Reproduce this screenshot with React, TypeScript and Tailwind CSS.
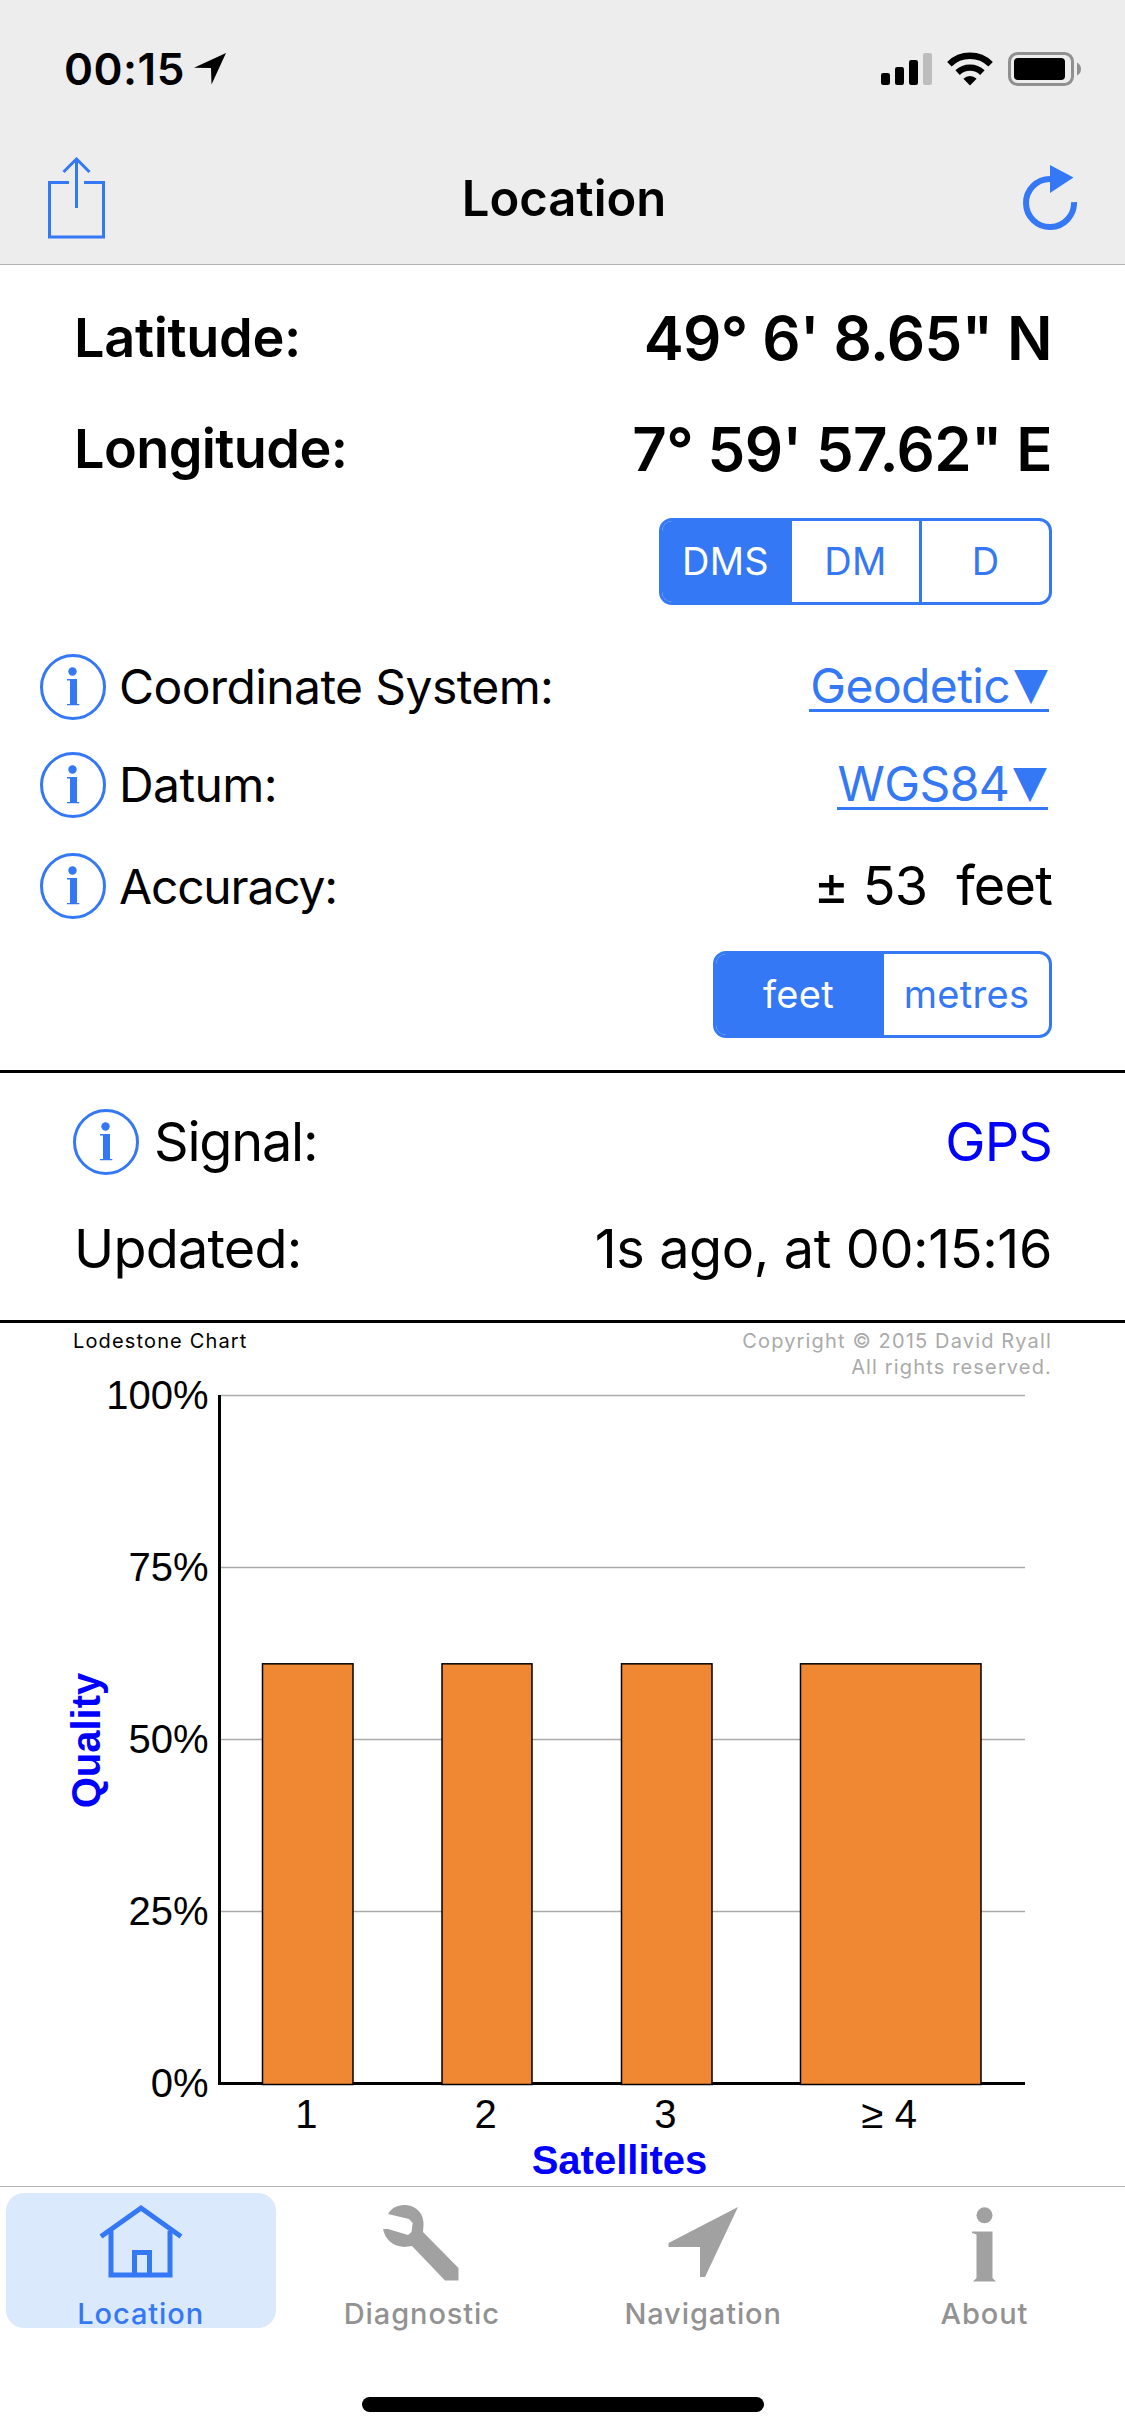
import { clsx } from "clsx"
import type { ReactNode } from "react"

const quality = [
  { label: "1", x: 262.5, width: 90.5, value: 61 },
  { label: "2", x: 442, width: 90, value: 61 },
  { label: "3", x: 621.5, width: 90.5, value: 61 },
  { label: "≥ 4", x: 800.5, width: 180.5, value: 61 },
]

const BASELINE = 703.5
const PX_PER_PERCENT = 6.88

function StatusBar() {
  return (
    <div className="flex h-[132px] items-center pt-[6px] pr-[44px] pl-[64px]">
      <span className="text-[44px] leading-none font-semibold tracking-[0.5px]">00:15</span>
      <svg className="ml-[9px] h-8 w-8" viewBox="0 0 32 32">
        <path d="M32 0 17.5 31.5 17 15 0 14.7Z" />
      </svg>
      <div className="ml-auto flex items-center">
        <svg className="h-8 w-[51px]" viewBox="0 0 51 32">
          <rect x="0" y="20" width="9" height="12" rx="2.2" />
          <rect x="14" y="14" width="9" height="18" rx="2.2" />
          <rect x="28" y="7" width="9" height="25" rx="2.2" />
          <rect x="42" y="0" width="9" height="32" rx="2.2" fill="#bdbdbd" />
        </svg>
        <svg className="ml-[15px] h-[34px] w-[46px]" viewBox="0 0 46 34">
          <g fill="none" stroke="#000" strokeWidth="6.4">
            <path d="M2.4 12.2A29.5 29.5 0 0 1 43.6 12.2" />
            <path d="M10.6 20.6A18 18 0 0 1 35.4 20.6" />
          </g>
          <path d="M23 33.5 16.4 26.7A9.5 9.5 0 0 1 29.6 26.7Z" />
        </svg>
        <svg className="ml-[15px] h-[34px] w-[73px]" viewBox="0 0 73 34">
          <rect x="1.5" y="1.5" width="63" height="31" rx="8" fill="none" stroke="#909090" strokeWidth="3" />
          <rect x="6" y="6" width="51" height="22" rx="4" />
          <path d="M69 10.5Q73 12.5 73 17T69 23.5Z" fill="#909090" />
        </svg>
      </div>
    </div>
  )
}

function NavBar() {
  return (
    <div className="flex h-[132px] items-center justify-between px-[48px]">
      <svg className="h-[82px] w-[57px] text-[#3478f6]" viewBox="0 0 57 82" fill="none" stroke="currentColor" strokeWidth="3">
        <path d="M21 25.5H1.5V80H55.5V25.5H36" />
        <path d="M28.5 51V2M15.5 15 28.5 2 41.5 15" />
      </svg>
      <h1 className="text-[49px] leading-none font-semibold">Location</h1>
      <svg className="h-[66px] w-[54px] text-[#3478f6]" viewBox="0 0 54 66">
        <path d="M27 14A24 24 0 1 0 51 37" fill="none" stroke="currentColor" strokeWidth="6" />
        <path d="M27 0 50.5 12.5 27 28Z" fill="currentColor" />
      </svg>
    </div>
  )
}

function InfoIcon() {
  return (
    <svg className="h-[66px] w-[66px] shrink-0 text-[#3478f6]" viewBox="0 0 66 66">
      <circle cx="33" cy="33" r="31.5" fill="none" stroke="currentColor" strokeWidth="3" />
      <circle cx="32.5" cy="17.5" r="4.2" fill="currentColor" />
      <path d="M27 25H37V50H39.3V51.2H27V50H30V26.5H27Z" fill="currentColor" />
    </svg>
  )
}

function Segmented({ options, selected }: { options: string[]; selected: string }) {
  return (
    <div className="flex h-[87px] overflow-hidden rounded-[13px] border-3 border-[#3478f6]">
      {options.map((option, i) => (
        <button
          key={option}
          className={clsx(
            "flex-1 pb-[2px] text-[38px] leading-none tracking-[0.3px]",
            option === selected ? "bg-[#3478f6] text-white" : "text-[#3478f6]",
            i > 0 && "border-l-3 border-[#3478f6]"
          )}
        >
          {option}
        </button>
      ))}
    </div>
  )
}

function DropdownLink({ children }: { children: ReactNode }) {
  return (
    <a className="mt-px flex items-baseline border-b-3 border-[#3478f6] pl-px text-[48px] leading-[46px] tracking-[-0.6px] text-[#3478f6]">
      {children}
      <span className="ml-[2px] origin-bottom scale-y-120 text-[37px] leading-none">▼</span>
    </a>
  )
}

function QualityChart() {
  return (
    <svg className="block h-[806px] w-[1125px] overflow-visible font-['Liberation_Sans',sans-serif]" viewBox="0 0 1125 806" fontSize="40">
      {[100, 75, 50, 25, 0].map((tick) => {
        const y = BASELINE - tick * PX_PER_PERCENT
        return (
          <g key={tick}>
            {tick > 0 && <line x1="221" x2="1025" y1={y} y2={y} stroke="#aaa" strokeWidth="1.5" />}
            <text x="208.5" y={y + 13.7} textAnchor="end">
              {tick}%
            </text>
          </g>
        )
      })}
      <path d="M219.5 15V703.5H1025" fill="none" stroke="#000" strokeWidth="3" />
      {quality.map((bar) => (
        <g key={bar.label}>
          <rect
            x={bar.x}
            y={BASELINE - bar.value * PX_PER_PERCENT}
            width={bar.width}
            height={bar.value * PX_PER_PERCENT + 1}
            fill="#ef8733"
            stroke="#000"
            strokeWidth="1.5"
          />
          <text x={bar.x + bar.width / 2 - 1.5} y="748" textAnchor="middle">
            {bar.label}
          </text>
        </g>
      ))}
      <g fill="#0000ff" fontWeight="bold" textAnchor="middle">
        <text x="619.5" y="794">
          Satellites
        </text>
        <text transform="translate(100 360.5) rotate(-90)">Quality</text>
      </g>
    </svg>
  )
}

const tabs = [
  {
    label: "Location",
    icon: (
      <g fill="none" stroke="currentColor" strokeWidth="5">
        <path d="M2 33.5 42 5 82 33.5" />
        <path d="M12 28V72H71V28" />
        <path d="M35.5 72V49.5H50.5V72" />
      </g>
    ),
  },
  {
    label: "Diagnostic",
    icon: (
      <path
        d="M8 11C12 4 18 2 26 2C38 3 44 12 43.5 22L43 29 78.5 65V77.5H65L32 43 24 44C12 43 5 36 3 26L8 26 28 32 31.5 29 32.7 20 29 16 8 11Z"
        fill="currentColor"
      />
    ),
  },
  {
    label: "Navigation",
    icon: <path d="M77 4 44 74H39V44H7.5V40Z" fill="currentColor" />,
  },
  {
    label: "About",
    icon: (
      <g fill="currentColor">
        <circle cx="42.5" cy="12.3" r="8" />
        <path d="M30 28.5H50.5V75L54 78.5H31L34.5 75V31.5L30 30Z" />
      </g>
    ),
  },
]

function TabBar() {
  return (
    <nav className="grid h-[211px] grid-cols-4 border-t border-[#b2b2b2] pt-[6px]">
      {tabs.map((tab, i) => (
        <div
          key={tab.label}
          className={clsx(
            "mx-auto flex h-[135px] w-[270px] flex-col items-center rounded-[18px] pt-[10px]",
            i === 0 ? "bg-[#dbe9fc] text-[#3478f6]" : "text-[#a1a1a1]"
          )}
        >
          <svg className="h-20 w-[84px]" viewBox="0 0 84 80">
            {tab.icon}
          </svg>
          <span className={clsx("mt-4 text-[29px] leading-none font-medium tracking-[0.9px]", i > 0 && "text-[#929292]")}>
            {tab.label}
          </span>
        </div>
      ))}
    </nav>
  )
}

export default function App() {
  return (
    <div className="flex h-[2436px] w-[1125px] flex-col overflow-hidden bg-white font-[Inter,sans-serif] text-black">
      <header className="h-[265px] border-b border-[#b2b2b2] bg-[#ededed]">
        <StatusBar />
        <NavBar />
      </header>

      <section className="border-b-3 border-black pt-[17px] pr-[73px] pb-8">
        <div className="flex h-[111px] items-center justify-between pl-[74px] font-semibold">
          <span className="text-[54px] leading-none tracking-[-0.3px]">Latitude:</span>
          <span className="text-[60px] leading-none tracking-[-0.6px]">49° 6' 8.65" N</span>
        </div>
        <div className="flex h-[111px] items-center justify-between pl-[74px] font-semibold">
          <span className="text-[54px] leading-none tracking-[-0.6px]">Longitude:</span>
          <span className="text-[60px] leading-none tracking-[-0.6px]">7° 59' 57.62" E</span>
        </div>
        <div className="mt-[14px] ml-auto w-[393px]">
          <Segmented options={["DMS", "DM", "D"]} selected="DMS" />
        </div>

        <div className="mt-[33px] flex h-[98px] items-center pl-10">
          <InfoIcon />
          <span className="ml-[13px] text-[48px] leading-none tracking-[-0.6px]">Coordinate System:</span>
          <div className="mr-[3px] ml-auto">
            <DropdownLink>Geodetic</DropdownLink>
          </div>
        </div>
        <div className="flex h-[98px] items-center pl-10">
          <InfoIcon />
          <span className="ml-[13px] text-[48px] leading-none tracking-[-0.6px]">Datum:</span>
          <div className="mr-[4px] ml-auto">
            <DropdownLink>WGS84</DropdownLink>
          </div>
        </div>
        <div className="flex h-[104px] items-center pl-10">
          <InfoIcon />
          <span className="ml-[13px] pt-[2px] text-[48px] leading-none tracking-[-1.2px]">Accuracy:</span>
          <span className="ml-auto text-[54px] leading-none tracking-[-0.8px] whitespace-pre">± 53  feet</span>
        </div>
        <div className="mt-[13px] ml-auto w-[339px]">
          <Segmented options={["feet", "metres"]} selected="feet" />
        </div>
      </section>

      <section className="border-b-3 border-black px-[73px] pt-4 pb-5 text-[54px] leading-none">
        <div className="flex h-[106px] items-center">
          <InfoIcon />
          <span className="ml-[15px] tracking-[-1.2px]">Signal:</span>
          <span className="ml-auto tracking-[-0.9px] text-[#0000ff]">GPS</span>
        </div>
        <div className="flex h-[105px] items-center justify-between pt-[2px] pl-px">
          <span className="tracking-[-0.8px]">Updated:</span>
          <span className="tracking-[-0.4px]">1s ago, at 00:15:16</span>
        </div>
      </section>

      <section className="pt-[5px]">
        <div className="flex h-[52px] justify-between px-[73px] text-[20px] leading-[26px] tracking-[1.15px]">
          <span>Lodestone Chart</span>
          <span className="text-right text-[#aaa]">
            Copyright © 2015 David Ryall
            <br />
            All rights reserved.
          </span>
        </div>
        <QualityChart />
      </section>

      <TabBar />
      <div className="mx-auto h-[15px] w-[402px] shrink-0 rounded-full bg-black" />
    </div>
  )
}
